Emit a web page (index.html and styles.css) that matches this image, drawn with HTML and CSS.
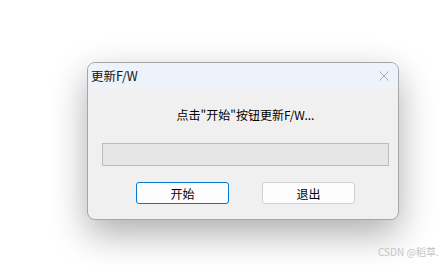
FILE: index.html
```html
<!DOCTYPE html>
<html lang="zh-CN">
  <head>
    <meta charset="UTF-8" />
    <meta name="viewport" content="width=device-width, initial-scale=1.0" />
    <title>更新F/W</title>
    <link rel="stylesheet" href="styles.css">
  </head>
  <body>
    <div class="dialog">
      <div class="title_bar">
        <span class="title">更新F/W</span>
        <svg class="close" width="10" height="10" viewBox="0 0 10 10">
          <path d="M0.5 0.5 L9.5 9.5 M9.5 0.5 L0.5 9.5" stroke="#a8a8a8" stroke-width="1" fill="none" />
        </svg>
      </div>
      <div class="content">
        <p class="message">点击"开始"按钮更新F/W...</p>
        <div class="progress"></div>
        <div class="btns">
          <button class="btn primary">开始</button>
          <button class="btn">退出</button>
        </div>
      </div>
    </div>
    <div class="watermark">CSDN @稻草.</div>
  </body>
</html>
```

FILE: styles.css
```css
* {
  margin: 0;
  padding: 0;
  box-sizing: border-box;
}
body {
  font-family: "Noto Sans CJK SC", "Noto Sans", sans-serif;
  background-color: #fff;
  width: 448px;
  height: 265px;
  overflow: hidden;
  position: relative;
  padding: 62px 0 0 87px;
}

.dialog {
  width: 312px;
  height: 158px;
  border: 1px solid #a6a6a6;
  border-radius: 8px;
  background-color: #f0f0f0;
  overflow: hidden;
  box-shadow: 0 14px 36px rgba(0, 0, 0, 0.32);
}

.title_bar {
  height: 25px;
  background-color: #eef2fb;
  display: flex;
  align-items: center;
  justify-content: space-between;
  padding: 0 9px 0 3px;
}
.title {
  font-size: 12.5px;
  color: #111;
}

.content {
  padding: 15px 9px 0 14px;
}
.message {
  font-size: 12px;
  color: #000;
  text-align: center;
  height: 24px;
  line-height: 24px;
}
.progress {
  margin-top: 16px;
  height: 23px;
  border: 1px solid #bcbcbc;
  background-color: #e6e6e6;
}

.btns {
  display: flex;
  justify-content: center;
  gap: 33px;
  margin-top: 16px;
}
.btn {
  width: 93px;
  height: 22px;
  font-family: "Noto Sans CJK SC", sans-serif;
  font-size: 12px;
  color: #000;
  background-color: #fdfdfd;
  border: 1px solid #d0d0d0;
  border-radius: 3px;
}
.btn.primary {
  border-color: #0078d4;
}

.watermark {
  position: absolute;
  left: 378px;
  top: 244px;
  font-size: 10px;
  color: #c4c4c4;
}
```
